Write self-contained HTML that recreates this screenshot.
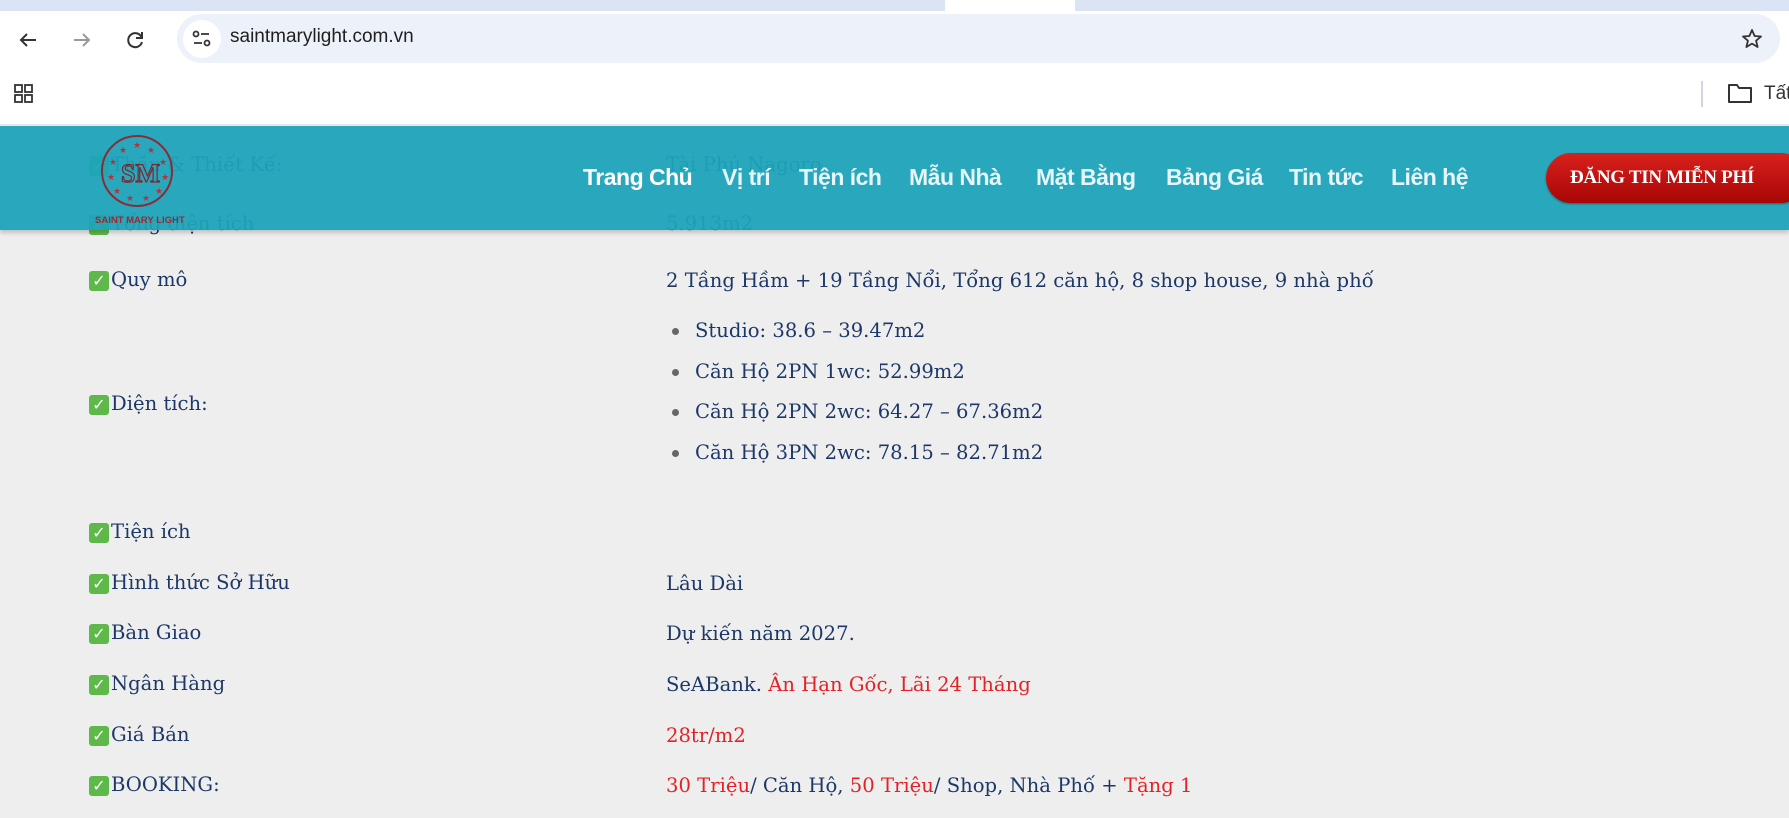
<!DOCTYPE html>
<html><head><meta charset="utf-8">
<style>
*{margin:0;padding:0;box-sizing:border-box}
body{width:1789px;height:818px;overflow:hidden;background:#eeeeee;position:relative;font-family:"DejaVu Serif","Liberation Serif",serif}
.abs{position:absolute;white-space:nowrap}
.tabs{left:0;top:0;width:1789px;height:12px;background:#dae4f4}
.tabs .t{position:absolute;left:945px;top:0;width:130px;height:12px;background:#fff}
.bar{left:0;top:11px;width:1789px;height:53px;background:#fff}
.pill{left:177px;top:14px;width:1603px;height:49px;background:#edf1f9;border-radius:25px}
.url{left:230px;top:26px;font:19px "Liberation Sans",sans-serif;color:#1f1f1f}
.bm{left:0;top:64px;width:1789px;height:61px;background:#fff;border-bottom:1px solid #dfe3e8}
.t1{font-size:19.6px;color:#1d3868;position:absolute;white-space:nowrap;line-height:1}
.red{color:#e32227}
.ck{display:inline-block;width:20px;height:20px;background:#5fb84a;border-radius:3px;color:#fff;font:bold 16px "DejaVu Sans",sans-serif;text-align:center;line-height:20px;vertical-align:0px;margin-right:2px}
.hdr{left:0;top:126px;width:1789px;height:104px;background:rgba(29,164,186,0.94);box-shadow:0 3px 4px rgba(0,0,0,.18)}
.nav{top:164px;font:600 23px "Liberation Sans",sans-serif;color:#e6f6fa;letter-spacing:-0.5px}
.btn{left:1546px;top:153px;width:260px;height:50px;border-radius:25px;background:linear-gradient(#d8211c,#a80606);box-shadow:0 1px 2px rgba(0,0,0,.4)}
.btn span{position:absolute;left:24px;top:14px;font:bold 19px "Liberation Serif",serif;color:#fff;letter-spacing:-0.3px}
.dot{position:absolute;width:7px;height:7px;border-radius:50%;background:#666}
</style></head><body>
<div class="abs tabs"><div class="t"></div></div>
<div class="abs bar"></div>
<svg class="abs" style="left:16px;top:28px" width="24" height="24" viewBox="0 0 24 24"><path d="M20 12H5M11 6l-6 6 6 6" fill="none" stroke="#333" stroke-width="2"/></svg>
<svg class="abs" style="left:70px;top:28px" width="24" height="24" viewBox="0 0 24 24"><path d="M4 12h15M13 6l6 6-6 6" fill="none" stroke="#9a9a9a" stroke-width="2"/></svg>
<svg class="abs" style="left:123px;top:28px" width="24" height="24" viewBox="0 0 24 24"><path d="M18.5 9A7 7 0 1 0 19 14" fill="none" stroke="#333" stroke-width="2"/><path d="M19 4v6h-6" fill="none" stroke="#333" stroke-width="2"/></svg>
<div class="abs pill"></div>
<div class="abs" style="left:183px;top:20px;width:38px;height:38px;border-radius:50%;background:#fff"></div>
<svg class="abs" style="left:191px;top:28px" width="22" height="22" viewBox="0 0 22 22"><circle cx="5" cy="6" r="2.5" fill="none" stroke="#333" stroke-width="1.8"/><path d="M10 6h8M3 15h8" stroke="#333" stroke-width="1.8"/><circle cx="16" cy="15" r="2.5" fill="none" stroke="#333" stroke-width="1.8"/></svg>
<div class="abs url">saintmarylight.com.vn</div>
<svg class="abs" style="left:1740px;top:27px" width="24" height="24" viewBox="0 0 24 24"><path d="M12 3l2.6 6 6.4.5-4.9 4.2 1.5 6.3L12 16.6 6.4 20l1.5-6.3L3 9.5l6.4-.5z" fill="none" stroke="#333" stroke-width="1.8" stroke-linejoin="round"/></svg>
<div class="abs bm"></div>
<svg class="abs" style="left:13px;top:83px" width="22" height="22" viewBox="0 0 22 22"><g fill="none" stroke="#333" stroke-width="1.8"><rect x="2" y="2" width="7" height="7"/><rect x="12" y="2" width="7" height="7"/><rect x="2" y="12" width="7" height="7"/><rect x="12" y="12" width="7" height="7"/></g></svg>
<div class="abs" style="left:1701px;top:81px;width:2px;height:26px;background:#d0d7e2"></div>
<svg class="abs" style="left:1727px;top:82px" width="26" height="22" viewBox="0 0 26 22"><path d="M2 3h8l2 3h12v14H2z" fill="none" stroke="#333" stroke-width="2" stroke-linejoin="round"/></svg>
<div class="abs" style="left:1764px;top:83px;font:19px 'Liberation Sans',sans-serif;color:#333">Tất</div>

<div class="t1" style="left:89px;top:155px"><span class="ck">✓</span>Thầu &amp; Thiết Kế:</div>
<div class="t1" style="left:666px;top:155px">Tài Phú Nagoro</div>
<div class="t1" style="left:89px;top:214px"><span class="ck">✓</span>Tổng diện tích</div>
<div class="t1" style="left:666px;top:214px">5.913m2</div>

<div class="abs hdr"></div>
<svg class="abs" style="left:95px;top:134px" width="90" height="92" viewBox="0 0 90 92">
<circle cx="42" cy="37" r="35" fill="none" stroke="#8a2c35" stroke-width="2"/>
<g fill="#b0343c" font-size="9" font-family="DejaVu Sans"><text x="38" y="14">★</text><text x="24" y="19">★</text><text x="52" y="19">★</text><text x="14" y="31">★</text><text x="64" y="31">★</text><text x="12" y="46">★</text><text x="66" y="46">★</text><text x="18" y="60">★</text><text x="60" y="60">★</text><text x="31" y="67">★</text><text x="47" y="67">★</text></g>
<text x="26" y="48" font-family="Liberation Serif" font-weight="bold" font-size="26" fill="none" stroke="#7a2830" stroke-width="1.2">SM</text>
<text x="0" y="89" font-family="Liberation Sans" font-weight="bold" font-size="9.5" fill="#9a2a30">SAINT MARY LIGHT</text>
</svg>
<div class="abs nav" style="left:583px;font-weight:bold;color:#fff">Trang Chủ</div>
<div class="abs nav" style="left:722px">Vị trí</div>
<div class="abs nav" style="left:799px">Tiện ích</div>
<div class="abs nav" style="left:909px">Mẫu Nhà</div>
<div class="abs nav" style="left:1036px">Mặt Bằng</div>
<div class="abs nav" style="left:1166px">Bảng Giá</div>
<div class="abs nav" style="left:1289px">Tin tức</div>
<div class="abs nav" style="left:1391px">Liên hệ</div>
<div class="abs btn"><span>ĐĂNG TIN MIỄN PHÍ</span></div>

<div class="t1" style="left:89px;top:270px"><span class="ck">✓</span>Quy mô</div>
<div class="t1" style="left:666px;top:271px">2 Tầng Hầm + 19 Tầng Nổi, Tổng 612 căn hộ, 8 shop house, 9 nhà phố</div>
<div class="dot" style="left:672px;top:328px"></div><div class="t1" style="left:695px;top:321px">Studio: 38.6 – 39.47m2</div>
<div class="dot" style="left:672px;top:369px"></div><div class="t1" style="left:695px;top:362px">Căn Hộ 2PN 1wc: 52.99m2</div>
<div class="dot" style="left:672px;top:409px"></div><div class="t1" style="left:695px;top:402px">Căn Hộ 2PN 2wc: 64.27 – 67.36m2</div>
<div class="dot" style="left:672px;top:450px"></div><div class="t1" style="left:695px;top:443px">Căn Hộ 3PN 2wc: 78.15 – 82.71m2</div>
<div class="t1" style="left:89px;top:394px"><span class="ck">✓</span>Diện tích:</div>
<div class="t1" style="left:89px;top:522px"><span class="ck">✓</span>Tiện ích</div>
<div class="t1" style="left:89px;top:573px"><span class="ck">✓</span>Hình thức Sở Hữu</div>
<div class="t1" style="left:666px;top:574px">Lâu Dài</div>
<div class="t1" style="left:89px;top:623px"><span class="ck">✓</span>Bàn Giao</div>
<div class="t1" style="left:666px;top:624px">Dự kiến năm 2027.</div>
<div class="t1" style="left:89px;top:674px"><span class="ck">✓</span>Ngân Hàng</div>
<div class="t1" style="left:666px;top:675px">SeABank. <span class="red">Ân Hạn Gốc, Lãi 24 Tháng</span></div>
<div class="t1" style="left:89px;top:725px"><span class="ck">✓</span>Giá Bán</div>
<div class="t1 red" style="left:666px;top:726px">28tr/m2</div>
<div class="t1" style="left:89px;top:775px"><span class="ck">✓</span>BOOKING:</div>
<div class="t1" style="left:666px;top:776px"><span class="red">30 Triệu</span>/ Căn Hộ, <span class="red">50 Triệu</span>/ Shop, Nhà Phố + <span class="red">Tặng 1</span></div>
</body></html>
